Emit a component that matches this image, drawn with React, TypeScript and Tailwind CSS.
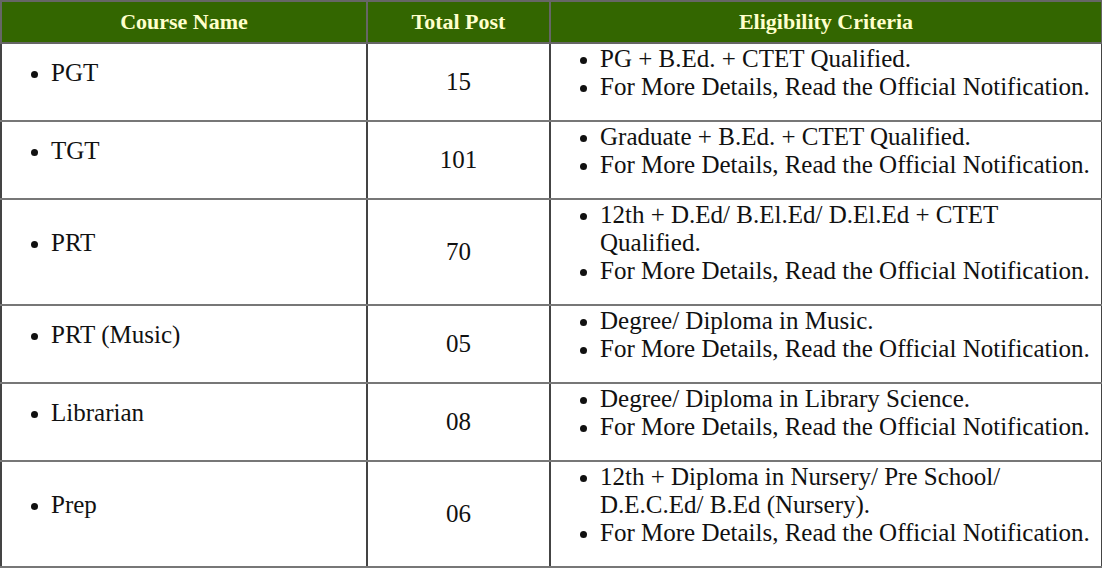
import React from "react";

type Row = { course: string; total: string; criteria: string[] };

const ROWS: Row[] = [
  {
    course: "PGT",
    total: "15",
    criteria: ["PG + B.Ed. + CTET Qualified.", "For More Details, Read the Official Notification."],
  },
  {
    course: "TGT",
    total: "101",
    criteria: ["Graduate + B.Ed. + CTET Qualified.", "For More Details, Read the Official Notification."],
  },
  {
    course: "PRT",
    total: "70",
    criteria: [
      "12th + D.Ed/ B.El.Ed/ D.El.Ed + CTET Qualified.",
      "For More Details, Read the Official Notification.",
    ],
  },
  {
    course: "PRT (Music)",
    total: "05",
    criteria: ["Degree/ Diploma in Music.", "For More Details, Read the Official Notification."],
  },
  {
    course: "Librarian",
    total: "08",
    criteria: ["Degree/ Diploma in Library Science.", "For More Details, Read the Official Notification."],
  },
  {
    course: "Prep",
    total: "06",
    criteria: [
      "12th + Diploma in Nursery/ Pre School/ D.E.C.Ed/ B.Ed (Nursery).",
      "For More Details, Read the Official Notification.",
    ],
  },
];

const th = "border-2 border-[#666] bg-[#336600] text-[#ffffcc] font-bold text-[22px] leading-[26px] py-[7px] text-center";
const td = "border-2 border-x-[#444] border-y-[#777] align-middle px-[9px] py-[1px]";
const list = "list-disc pl-[40px] mb-[18px] marker:text-[22px]";

export default function App() {
  return (
    <div className="bg-white w-[1102px] h-[570px] overflow-hidden font-[family-name:Liberation_Serif,serif] text-[#111]">
      <table className="border-collapse w-[1101px] table-fixed">
        <colgroup>
          <col className="w-[366px]" />
          <col className="w-[183px]" />
          <col className="w-[552px]" />
        </colgroup>
        <thead>
          <tr className="h-[42px]">
            <th className={th}>Course Name</th>
            <th className={th}>Total Post</th>
            <th className={th}>Eligibility Criteria</th>
          </tr>
        </thead>
        <tbody className="text-[25px] leading-[28px]">
          {ROWS.map((r) => (
            <tr key={r.course}>
              <td className={td}>
                <ul className={list}>
                  <li>{r.course}</li>
                </ul>
              </td>
              <td className={td + " text-center"}>{r.total}</td>
              <td className={td}>
                <ul className={list}>
                  {r.criteria.map((c) => (
                    <li key={c}>{c}</li>
                  ))}
                </ul>
              </td>
            </tr>
          ))}
        </tbody>
      </table>
    </div>
  );
}
